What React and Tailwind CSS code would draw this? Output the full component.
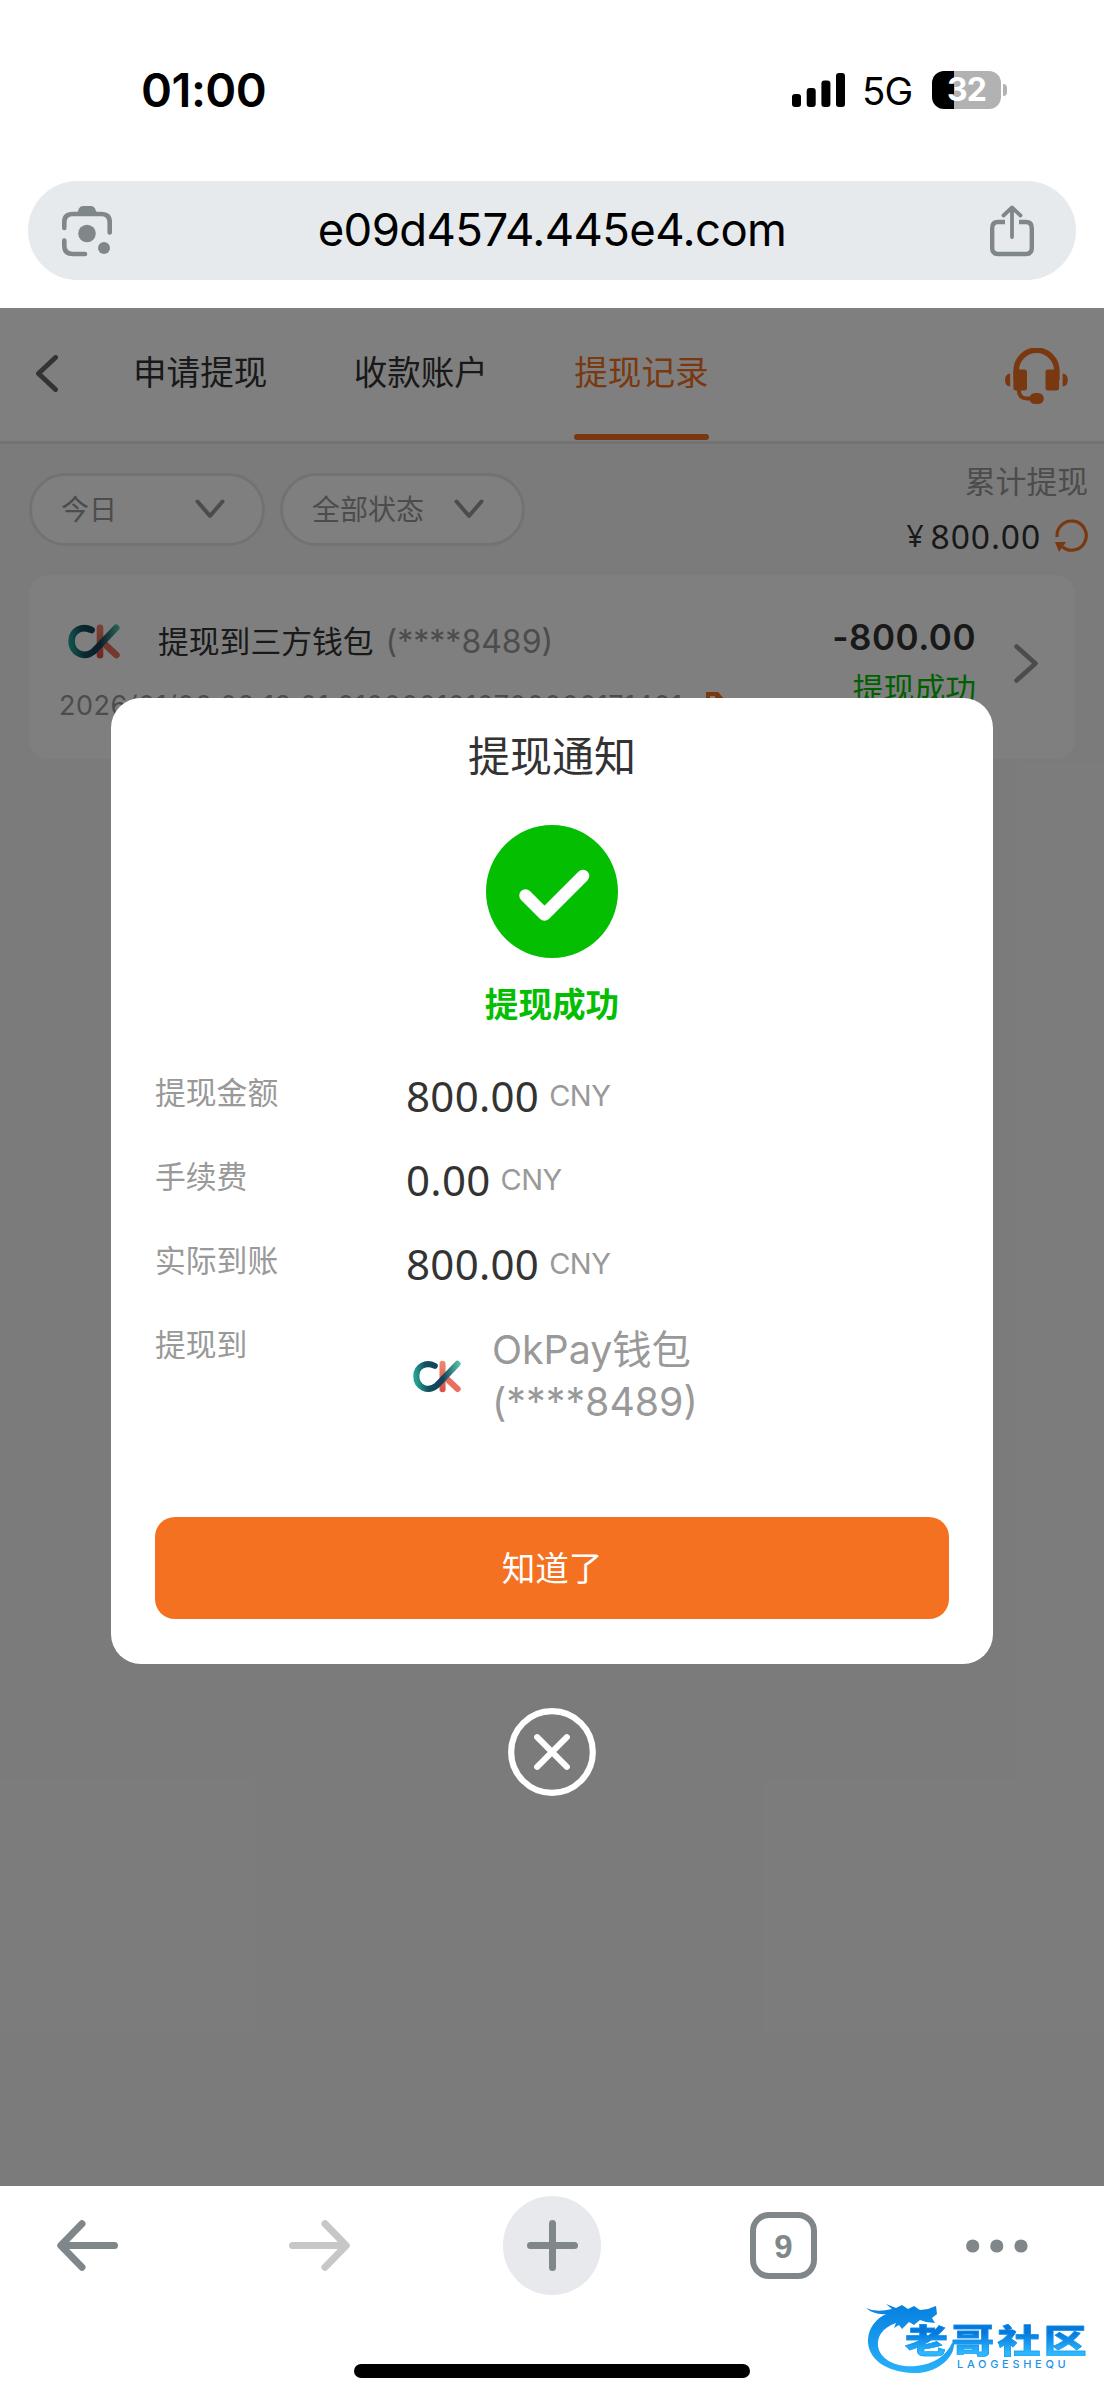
import React, { useState } from "react";

const TABS = ["申请提现", "收款账户", "提现记录"];

const FILTERS = [
  { label: "今日", width: "w-[236px]", gap: "gap-[78px]" },
  { label: "全部状态", width: "w-[245px]", gap: "gap-[30px]" },
];

const DETAILS = [
  { label: "提现金额", value: "800.00" },
  { label: "手续费", value: "0.00" },
  { label: "实际到账", value: "800.00" },
];

const OkPayLogo = ({ id, className }) => (
  <svg viewBox="0 0 52 35" className={className} fill="none" strokeWidth="6.6" strokeLinecap="round">
    <defs>
      <linearGradient id={`${id}-teal`} gradientUnits="userSpaceOnUse" x1="2" y1="12" x2="50" y2="6">
        <stop offset="0" stopColor="#23a08f" />
        <stop offset="0.25" stopColor="#12505f" />
        <stop offset="0.6" stopColor="#12405a" />
        <stop offset="1" stopColor="#55bda6" />
      </linearGradient>
      <linearGradient id={`${id}-red`} gradientUnits="userSpaceOnUse" x1="0" y1="2" x2="0" y2="33">
        <stop offset="0" stopColor="#ee8870" />
        <stop offset="1" stopColor="#dc4f48" />
      </linearGradient>
    </defs>
    <path d="M32 3.8V31.2" stroke={`url(#${id}-red)`} />
    <path d="M36 19.5L48.4 31" stroke="#e8705f" />
    <path d="M23.6 6C14 1.2 3.6 6.5 3.6 17C3.6 29 16 35 25.5 27.5L48.2 3.8" stroke={`url(#${id}-teal)`} />
  </svg>
);

const Chevron = ({ className, d, viewBox, width = 5 }) => (
  <svg viewBox={viewBox} className={className} fill="none" stroke="currentColor" strokeWidth={width} strokeLinecap="round" strokeLinejoin="round">
    <path d={d} />
  </svg>
);

const StatusBar = () => (
  <div className="flex h-[181px] items-start justify-between pl-[141px] pr-[97px] pt-[60px]">
    <span className="text-[47px] font-semibold leading-[60px] tracking-[-0.5px] text-black">01:00</span>
    <div className="flex h-[60px] items-center">
      <svg viewBox="0 0 54 34" className="h-[34px] w-[54px]" fill="#000">
        <rect x="0" y="21" width="9" height="13" rx="3" />
        <rect x="14.7" y="15" width="9" height="19" rx="3" />
        <rect x="29.4" y="7.5" width="9" height="26.5" rx="3" />
        <rect x="44" y="0" width="9" height="34" rx="3" />
      </svg>
      <span className="ml-[16px] w-[70px] pt-[2px] text-[38.5px] leading-[60px] tracking-[-0.8px] text-black">5G</span>
      <div className="flex h-[38px] w-[69px] items-center justify-center rounded-[12px] bg-[linear-gradient(90deg,#000_32%,#b2b2b2_32%)]">
        <span className="text-[32px] font-bold leading-[38px] tracking-[-1px] text-white">32</span>
      </div>
      <div className="ml-[2px] h-[12px] w-[4px] rounded-r-full bg-[#b2b2b2]" />
    </div>
  </div>
);

const AddressBar = () => (
  <div className="mx-[28px] flex h-[99px] items-center justify-between rounded-full bg-[#e6eaed] pl-[34px] pr-[42px] text-[#80878a]">
    <svg viewBox="0 0 50 52" className="h-[52px] w-[50px]" fill="none" stroke="currentColor" strokeWidth="4.6" strokeLinecap="round">
      <path d="M2.3 23V17Q2.3 9 11 9H39Q47.7 9 47.7 17V27.5" />
      <path d="M2.3 35.5V41Q2.3 49 11 49H23" />
      <path d="M15 8.5L17 3.5Q18 1 20.5 1H29.5Q32 1 33 3.5L35 8.5Z" fill="currentColor" stroke="none" />
      <circle cx="25" cy="28.5" r="8.8" fill="currentColor" stroke="none" />
      <circle cx="42" cy="43" r="6" fill="currentColor" stroke="none" />
    </svg>
    <span className="mb-[2px] ml-[2px] text-[45.5px] leading-[60px] tracking-[-0.6px] text-black">e09d4574.445e4.com</span>
    <svg viewBox="0 0 44 52" className="h-[52px] w-[44px]" fill="none" stroke="currentColor" strokeWidth="4.4" strokeLinecap="round" strokeLinejoin="round">
      <path d="M15 17H8Q2.2 17 2.2 23V43Q2.2 49 8 49H36Q41.8 49 41.8 43V23Q41.8 17 36 17H29" strokeLinecap="butt" />
      <path d="M22 32V3M13.5 10.5L22 2.5L30.5 10.5" strokeWidth="3.8" />
    </svg>
  </div>
);

const PageHeader = ({ active, onSelect }) => (
  <header className="flex h-[136px] items-start justify-between border-b-[3px] border-[#e4e4e4] bg-white pl-[36px] pr-[36px]">
    <div className="flex">
      <Chevron viewBox="0 0 22 37" d="M19.5 2.5L2.5 18.5L19.5 34.5" className="mt-[47px] h-[37px] w-[22px] text-[#666]" />
      <nav className="ml-[75px] flex gap-[86.3px]">
        {TABS.map((tab, index) => (
          <button key={tab} onClick={() => onSelect(index)} className="flex h-[132px] flex-col justify-between">
            <span className={`pt-[40px] text-[33.6px] leading-[50px] ${index === active ? "text-[#f57122]" : "text-[#333]"}`}>{tab}</span>
            <span className={`h-[6px] w-full rounded-full ${index === active ? "bg-[#f57122]" : ""}`} />
          </button>
        ))}
      </nav>
    </div>
    <svg viewBox="0 0 63 56" className="mt-[40px] h-[56px] w-[63px]" fill="#f57122">
      <path d="M11.2 32V22.5A20.3 20.3 0 0 1 51.8 22.5V32" fill="none" stroke="#f57122" strokeWidth="5.6" />
      <rect x="8.4" y="21.5" width="13.6" height="21" rx="2.5" />
      <rect x="40.5" y="21.5" width="13.6" height="21" rx="2.5" />
      <path d="M5.2 25.5V38.5Q0 38 0 32T5.2 25.5ZM57.6 25.5V38.5Q62.8 38 62.8 32T57.6 25.5Z" />
      <path d="M13.8 42Q14 50.5 22 50.5H28" fill="none" stroke="#f57122" strokeWidth="4" />
      <rect x="24.5" y="45" width="14.3" height="11" rx="5.5" />
    </svg>
  </header>
);

const Toolbar = () => (
  <div className="flex h-[131px] justify-between pl-[29px] pr-[16px]">
    <div className="flex gap-[15px] pt-[29px]">
      {FILTERS.map((filter) => (
        <div key={filter.label} className={`flex h-[73px] items-center rounded-full border-[3px] border-[#e4e4e4] bg-white pl-[29px] text-[#999] ${filter.width} ${filter.gap}`}>
          <span className="pt-[2px] text-[28px] leading-[40px]">{filter.label}</span>
          <Chevron viewBox="0 0 30 20" d="M2.5 2.5L15 17L27.5 2.5" className="h-[20px] w-[30px]" width={4} />
        </div>
      ))}
    </div>
    <div className="flex flex-col items-end pt-[15px]">
      <span className="text-[30.8px] leading-[46px] text-[#999]">累计提现</span>
      <div className="mt-[7px] flex items-center text-[#333]">
        <span className="mr-[7px] font-['Noto_Sans'] text-[30px] leading-[48px]">¥</span>
        <span className="font-['Noto_Sans'] text-[33.6px] leading-[48px] tracking-[0.9px]">800.00</span>
        <svg viewBox="0 0 33 33" className="ml-[14px] h-[33px] w-[33px]" fill="none" stroke="#f57122" strokeWidth="3.2">
          <path d="M2.1 18A14.6 14.6 0 1 1 7.5 28" />
          <path d="M0 23H11L4 33Z" fill="#f57122" stroke="none" />
        </svg>
      </div>
    </div>
  </div>
);

const RecordCard = () => (
  <div className="ml-[29px] flex h-[184px] w-[1046px] justify-between rounded-[20px] bg-white pl-[30px] pr-[37px]">
    <div>
      <div className="mt-[44px] flex h-[46px] items-center whitespace-nowrap text-[30.8px] leading-[46px]">
        <OkPayLogo id="record" className="ml-[9px] h-[35px] w-[52px]" />
        <span className="ml-[38px] text-[#333]">提现到三方钱包</span>
        <span className="ml-[12px] text-[32px] text-[#999]">(****8489)</span>
      </div>
      <div className="mt-[21px] flex h-[40px] items-center whitespace-nowrap">
        <span className="text-[27px] leading-[40px] tracking-[0.5px] text-[#999]">2026/01/06 08:18:01 0100001010700000171401</span>
        <svg viewBox="0 0 22 28" className="ml-[20px] h-[28px] w-[22px]" fill="none" stroke="#f57122" strokeWidth="4">
          <path d="M5 2H14L20 9V20H5Z" />
          <path d="M14 2V9H20Z" fill="#f57122" />
          <path d="M1.5 8V26H15" />
        </svg>
      </div>
    </div>
    <div className="flex">
      <div className="flex flex-col items-end">
        <span className="mt-[37px] text-[35px] font-semibold leading-[50px] tracking-[0.5px] text-[#333]">-800.00</span>
        <span className="mt-[4px] text-[30.8px] leading-[46px] text-[#04be02]">提现成功</span>
      </div>
      <Chevron viewBox="0 0 24 39" d="M2.5 2.5L21.5 19.5L2.5 36.5" className="ml-[38px] mt-[69px] h-[39px] w-[24px] text-[#999]" width={4.6} />
    </div>
  </div>
);

const NoticeModal = ({ onClose }) => (
  <div className="absolute inset-0 flex flex-col items-center bg-black/50 pt-[390px]">
    <div className="flex h-[966px] w-[882px] flex-col items-center rounded-[30px] bg-white px-[44px]">
      <h2 className="mt-[29px] text-[42px] leading-[60px] text-[#333]">提现通知</h2>
      <svg viewBox="0 0 132 133" className="mt-[38px] h-[133px] w-[132px]">
        <ellipse cx="66" cy="66.5" rx="66" ry="66.5" fill="#04be02" />
        <path d="M39.5 70.5L58.5 89.5L97 51" fill="none" stroke="#fff" strokeWidth="12.5" strokeLinecap="round" strokeLinejoin="round" />
      </svg>
      <p className="mt-[22px] text-[33.6px] font-bold leading-[50px] text-[#04be02]">提现成功</p>

      <div className="mt-[33px] flex w-full flex-col">
        {DETAILS.map((item) => (
          <div key={item.label} className="flex h-[84.3px] items-start">
            <span className="w-[251px] text-[30.8px] leading-[60px] text-[#999]">{item.label}</span>
            <span className="flex items-center pt-[3px]">
              <span className="font-['Noto_Sans'] text-[42px] leading-[60px] tracking-[0.3px] text-[#333]">{item.value}</span>
              <span className="ml-[10px] text-[29px] leading-[60px] tracking-[-0.5px] text-[#999]">CNY</span>
            </span>
          </div>
        ))}
        <div className="flex items-start">
          <span className="w-[258px] text-[30.8px] leading-[60px] text-[#999]">提现到</span>
          <OkPayLogo id="modal" className="mt-[45px] h-[33px] w-[48px]" />
          <div className="ml-[31px] pt-[9px] text-[39.3px] leading-[52px] text-[#999]">
            <p>OkPay钱包</p>
            <p>(****8489)</p>
          </div>
        </div>
      </div>

      <button onClick={onClose} className="mb-[45px] mt-auto h-[102px] w-full shrink-0 rounded-[20px] bg-[#f57122] pt-[3px] text-[33.6px] leading-[50px] text-white">
        知道了
      </button>
    </div>
    <button onClick={onClose} className="mt-[44px]">
      <svg viewBox="0 0 89 89" className="h-[88px] w-[88px]" fill="none" stroke="#fff" strokeLinecap="round">
        <circle cx="44.5" cy="44.5" r="41.3" strokeWidth="6.2" />
        <path d="M29.5 29.5L59.5 59.5M59.5 29.5L29.5 59.5" strokeWidth="6.2" />
      </svg>
    </button>
  </div>
);

const Watermark = () => (
  <div className="absolute bottom-[18px] right-[16px] h-[88px] w-[222px]">
    <svg viewBox="0 0 222 88" className="absolute inset-0 h-full w-full" fill="url(#ring)">
      <defs>
        <linearGradient id="ring" gradientUnits="userSpaceOnUse" x1="0" y1="10" x2="0" y2="84">
          <stop offset="0" stopColor="#067fe0" />
          <stop offset="1" stopColor="#2bb5fb" />
        </linearGradient>
      </defs>
      <path d="M0 14Q10 19 26 15L20 10L30 14L36 11L42 15L48 12L54 16L62 15L70 12L71 20L66 24L69 29L60 28L54 26L48 31L43 28L36 35L33 31L28 34L30 29C16 34 11 43 12 52C14 67 33 74 50 72C68 70 80 62 86 49L88 50C88 66 68 80 47 79C20 78 1 65 2 45C3 33 10 25 20 20Q8 21 0 14Z" />
    </svg>
    <div className="relative ml-[39px] mt-[30px] w-[139px] origin-left scale-x-[1.3]">
      <p className="whitespace-nowrap bg-linear-to-b from-[#0578dc] from-25% to-[#2cb8ff] to-85% bg-clip-text text-[33px] font-black leading-[34px] tracking-[2.6px] text-transparent [-webkit-text-stroke:0.5px_#1593ee]">老哥社区</p>
    </div>
    <p className="relative ml-[91px] text-[11px] font-medium leading-[12px] tracking-[3.7px] text-[#1b93e8]">LAOGESHEQU</p>
  </div>
);

const BrowserToolbar = () => (
  <footer className="relative h-[214px] bg-white text-[#80878a]">
    <div className="flex h-[119px] items-center pl-[57px]">
      <svg viewBox="0 0 61 51" className="h-[51px] w-[61px]" fill="none" stroke="currentColor" strokeWidth="7" strokeLinecap="round" strokeLinejoin="round">
        <path d="M57.5 25.5H4M25 3.8L3.8 25.5L25 47.2" />
      </svg>
      <svg viewBox="0 0 61 51" className="ml-[171px] h-[51px] w-[61px]" fill="none" stroke="#c7c7c7" strokeWidth="7" strokeLinecap="round" strokeLinejoin="round">
        <path d="M3.5 25.5H57M36 3.8L57.2 25.5L36 47.2" />
      </svg>
      <div className="ml-[153px] flex h-[99px] w-[98px] items-center justify-center rounded-full bg-[#e8e9ed]">
        <svg viewBox="0 0 51 51" className="h-[51px] w-[51px]" fill="none" stroke="currentColor" strokeWidth="7" strokeLinecap="round">
          <path d="M25.5 3.5V47.5M3.5 25.5H47.5" />
        </svg>
      </div>
      <div className="ml-[149px] flex h-[67px] w-[67px] items-center justify-center rounded-[19px] border-[6px] border-[#80878a]">
        <span className="pt-[2px] font-['Liberation_Sans'] text-[33px] font-bold leading-[32px]">9</span>
      </div>
      <svg viewBox="0 0 62 14" className="ml-[149px] h-[14px] w-[62px]" fill="currentColor">
        <circle cx="6.7" cy="7" r="6.6" />
        <circle cx="30.8" cy="7" r="6.6" />
        <circle cx="55" cy="7" r="6.6" />
      </svg>
    </div>
    <div className="mx-auto mt-[59px] h-[14px] w-[396px] rounded-full bg-black" />
    <Watermark />
  </footer>
);

const App = () => {
  const [activeTab, setActiveTab] = useState(2);
  const [showNotice, setShowNotice] = useState(true);

  return (
    <div className="flex h-[2400px] w-[1104px] flex-col overflow-hidden bg-white font-['Inter','Noto_Sans_CJK_SC',sans-serif]">
      <div className="h-[307.5px] shrink-0">
        <StatusBar />
        <AddressBar />
      </div>
      <main className="relative flex-1 bg-[#f7f7f7]">
        <PageHeader active={activeTab} onSelect={setActiveTab} />
        <Toolbar />
        <RecordCard />
        {showNotice && <NoticeModal onClose={() => setShowNotice(false)} />}
      </main>
      <BrowserToolbar />
    </div>
  );
};

export default App;
